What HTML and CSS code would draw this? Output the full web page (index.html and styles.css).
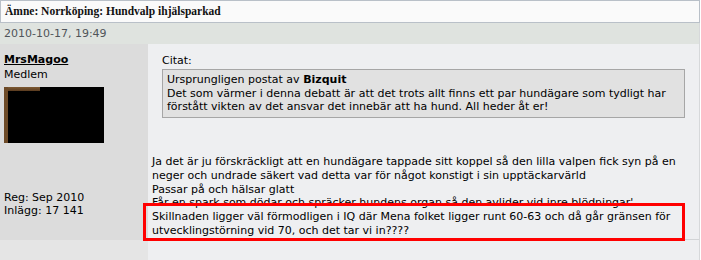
FILE: index.html
```html
<!DOCTYPE html>
<html lang="sv">
<head>
    <meta charset="UTF-8">
    <meta name="viewport" content="width=device-width, initial-scale=1.0">
    <title>Norrköping: Hundvalp ihjälsparkad</title>
    <link rel="stylesheet" href="styles.css">
</head>
<body>
    <div class="thread-title">Ämne: Norrköping: Hundvalp ihjälsparkad</div>
    <div class="post">
        <div class="post-date">2010-10-17, 19:49</div>
        <div class="post-body">
            <div class="userinfo">
                <a class="username" href="#">MrsMagoo</a>
                <div class="usertitle">Medlem</div>
                <div class="avatar"></div>
                <div class="userstats">
                    <div>Reg: Sep 2010</div>
                    <div>Inlägg: 17 141</div>
                </div>
            </div>
            <div class="message">
                <div class="quote-label">Citat:</div>
                <div class="quote">
                    <div>Ursprungligen postat av <strong>Bizquit</strong></div>
                    Det som värmer i denna debatt är att det trots allt finns ett par hundägare som tydligt har förstått vikten av det ansvar det innebär att ha hund. All heder åt er!
                </div>
                <div class="message-text">
                    Ja det är ju förskräckligt att en hundägare tappade sitt koppel så den lilla valpen fick syn på en neger och undrade säkert vad detta var för något konstigt i sin upptäckarvärld<br>
                    Passar på och hälsar glatt<br>
                    Får en spark som dödar och spräcker hundens organ så den avlider vid inre blödningar'<br>
                    Skillnaden ligger väl förmodligen i IQ där Mena folket ligger runt 60-63 och då går gränsen för utvecklingstörning vid 70, och det tar vi in????
                </div>
            </div>
            <div class="highlight"></div>
        </div>
        <div class="post-foot">
            <div class="foot-left"></div>
            <div class="foot-right"></div>
        </div>
    </div>
</body>
</html>
```

FILE: styles.css
```css
body {
    margin: 0;
    padding: 0;
    background-color: #fff;
    font-family: Verdana, "DejaVu Sans", sans-serif;
    font-size: 11px;
    line-height: 13.75px;
    color: #000;
}

.thread-title {
    width: 698px;
    height: 21px;
    line-height: 21px;
    padding-left: 4px;
    box-sizing: content-box;
    width: 694px;
    background-color: #fafafa;
    border: 1px solid #b9c0c8;
    font-family: "Liberation Serif", serif;
    font-weight: bold;
    font-size: 11.5px;
    color: #111;
}

.post {
    width: 699px;
    border-right: 1px solid #d6d8da;
}

.post-date {
    height: 21px;
    line-height: 21px;
    padding-left: 4px;
    background-color: #dfe3df;
    color: #50555a;
}

.post-body {
    position: relative;
    display: flex;
    height: 196px;
}

.userinfo {
    width: 140px;
    padding: 9px 4px 0;
    background-color: #dcdcdc;
}

.username {
    display: block;
    font-weight: bold;
    color: #000;
    text-decoration: underline;
}

.usertitle {
    margin-top: 1px;
}

.avatar {
    width: 96px;
    height: 56px;
    margin-top: 5px;
    background: linear-gradient(#7d5a33, #5a3c20) top left / 32px 4px no-repeat, #000;
    border-left: 4px solid #6e4b28;
}

.userstats {
    margin-top: 48px;
}

.message {
    flex: 1;
    padding: 10px 14px 0 4px;
    background-color: #eeeff1;
    border-bottom: 1px solid #d2d4d6;
}

.quote-label {
    margin-left: 10px;
    margin-bottom: 1px;
}

.quote {
    margin-left: 10px;
    padding: 3px 4px;
    background-color: #e1e1e1;
    border: 1px solid #a6a6a6;
}

.message-text {
    margin-top: 37px;
}

.highlight {
    position: absolute;
    left: 143px;
    top: 159px;
    width: 542px;
    height: 38px;
    box-sizing: border-box;
    border: 3px solid #f00;
}

.post-foot {
    display: flex;
    height: 20px;
}

.foot-left {
    width: 148px;
    background-color: #e5e5e5;
}

.foot-right {
    flex: 1;
    background-color: #eeeff1;
}
```
